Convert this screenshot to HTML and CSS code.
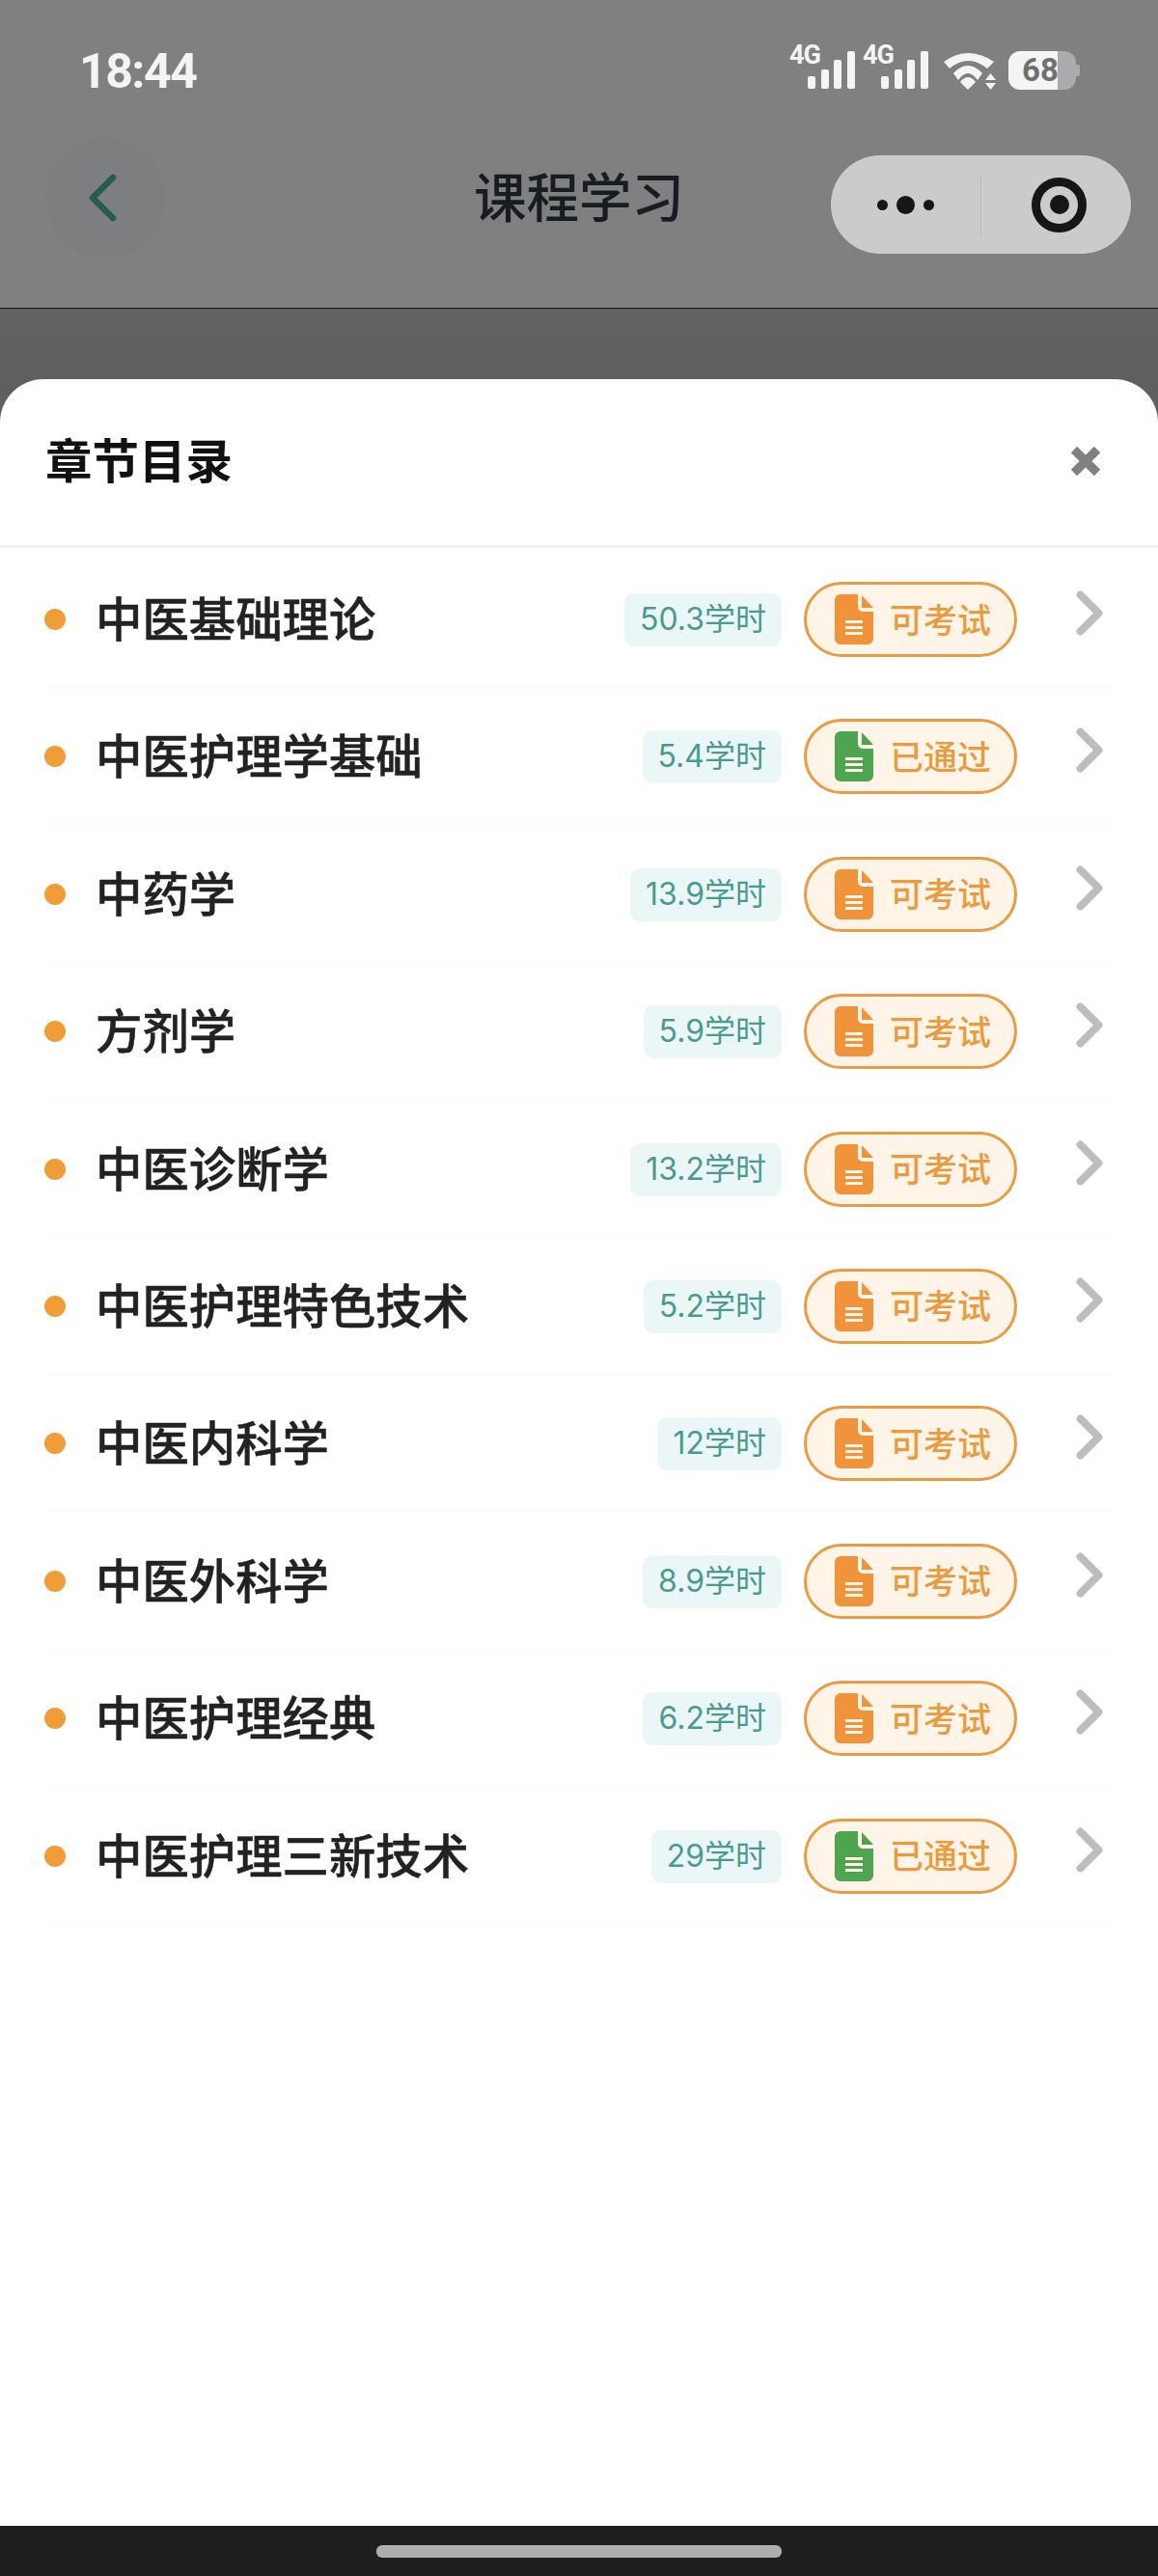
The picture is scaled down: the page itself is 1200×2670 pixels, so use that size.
FILE: index.html
```html
<!DOCTYPE html>
<html lang="zh-CN">
<head>
  <meta charset="UTF-8">
  <meta name="viewport" content="width=device-width, initial-scale=1.0">
  <title>课程学习</title>
  <link rel="stylesheet" href="styles.css">
</head>
<body>
  <svg class="defs" aria-hidden="true">
    <symbol id="doc" viewBox="0 0 40 52">
      <path fill="currentColor" d="M6 0H24V13a5 5 0 0 0 5 5H40V46a6 6 0 0 1-6 6H6a6 6 0 0 1-6-6V6a6 6 0 0 1 6-6z"/>
      <path fill="currentColor" d="M28 1L40 14H28z"/>
      <path fill="#fef5e8" d="M11 27H29V30H11zM11 33H29V36H11zM11 39H29V42H11z"/>
    </symbol>
    <symbol id="chev" viewBox="0 0 28 47">
      <path d="M4.5 4.5L23.5 23.5L4.5 42.5" fill="none" stroke="currentColor" stroke-width="8" stroke-linecap="round" stroke-linejoin="round"/>
    </symbol>
  </svg>

  <div class="topbar">
    <div class="status">
      <span class="clock">18:44</span>
      <svg class="status-icons" width="310" height="60" viewBox="0 0 310 60">
        <g fill="#f4f4f4">
          <text class="net" x="8" y="26">4G</text>
          <rect x="27" y="39" width="8" height="13" rx="2"/>
          <rect x="41" y="32" width="8" height="20" rx="2"/>
          <rect x="54" y="22" width="8" height="30" rx="2"/>
          <rect x="68" y="13" width="8" height="39" rx="2"/>
          <text class="net" x="84" y="26">4G</text>
          <rect x="103" y="39" width="8" height="13" rx="2"/>
          <rect x="117" y="32" width="8" height="20" rx="2"/>
          <rect x="130" y="22" width="8" height="30" rx="2"/>
          <rect x="144" y="13" width="8" height="39" rx="2"/>
          <path d="M168 24Q193 6 220 24L213 31Q193 15 174 31zM178 36Q193 20 208 36L203 43Q193 29 183 43zM185 45Q193 35 201 45L193 53z"/>
          <path d="M216.5 36L222 43H211zM211 46H222L216.5 53z"/>
          <path fill="#ababab" d="M280 13h13a12 12 0 0 1 12 12v16a12 12 0 0 1-12 12h-13z"/>
          <path fill="#ababab" d="M305 27h2a2 2 0 0 1 2 2v8a2 2 0 0 1-2 2h-2z"/>
          <path d="M247 13h39v40h-39a12 12 0 0 1-12-12v-16a12 12 0 0 1 12-12z"/>
          <text class="batt" x="249" y="44">68</text>
        </g>
      </svg>
    </div>
    <div class="nav">
      <div class="back">
        <svg width="30" height="50" viewBox="0 0 30 50"><path d="M26 4L5 25L26 46" fill="none" stroke="#235c50" stroke-width="6.5" stroke-linecap="round" stroke-linejoin="round"/></svg>
      </div>
      <div class="nav-title">课程学习</div>
      <div class="capsule">
        <div class="capsule-more">
          <i class="dot-s"></i><i class="dot-b"></i><i class="dot-s"></i>
        </div>
        <div class="capsule-sep"></div>
        <div class="capsule-home"><i></i></div>
      </div>
    </div>
  </div>

  <div class="backdrop">
    <div class="sheet">
      <div class="sheet-head">
        <span class="sheet-title">章节目录</span>
        <svg class="close" width="32" height="32" viewBox="0 0 32 32"><path d="M4 4L28 28M28 4L4 28" stroke="#808080" stroke-width="9" fill="none"/></svg>
      </div>
      <div class="list">
        <div class="row">
          <i class="bullet"></i><span class="name">中医基础理论</span><span class="hours">50.3学时</span>
          <span class="pill"><svg class="doc"><use href="#doc"/></svg>可考试</span>
          <svg class="chev"><use href="#chev"/></svg>
        </div>
        <div class="row">
          <i class="bullet"></i><span class="name">中医护理学基础</span><span class="hours">5.4学时</span>
          <span class="pill"><svg class="doc passed"><use href="#doc"/></svg>已通过</span>
          <svg class="chev"><use href="#chev"/></svg>
        </div>
        <div class="row">
          <i class="bullet"></i><span class="name">中药学</span><span class="hours">13.9学时</span>
          <span class="pill"><svg class="doc"><use href="#doc"/></svg>可考试</span>
          <svg class="chev"><use href="#chev"/></svg>
        </div>
        <div class="row">
          <i class="bullet"></i><span class="name">方剂学</span><span class="hours">5.9学时</span>
          <span class="pill"><svg class="doc"><use href="#doc"/></svg>可考试</span>
          <svg class="chev"><use href="#chev"/></svg>
        </div>
        <div class="row">
          <i class="bullet"></i><span class="name">中医诊断学</span><span class="hours">13.2学时</span>
          <span class="pill"><svg class="doc"><use href="#doc"/></svg>可考试</span>
          <svg class="chev"><use href="#chev"/></svg>
        </div>
        <div class="row">
          <i class="bullet"></i><span class="name">中医护理特色技术</span><span class="hours">5.2学时</span>
          <span class="pill"><svg class="doc"><use href="#doc"/></svg>可考试</span>
          <svg class="chev"><use href="#chev"/></svg>
        </div>
        <div class="row">
          <i class="bullet"></i><span class="name">中医内科学</span><span class="hours">12学时</span>
          <span class="pill"><svg class="doc"><use href="#doc"/></svg>可考试</span>
          <svg class="chev"><use href="#chev"/></svg>
        </div>
        <div class="row">
          <i class="bullet"></i><span class="name">中医外科学</span><span class="hours">8.9学时</span>
          <span class="pill"><svg class="doc"><use href="#doc"/></svg>可考试</span>
          <svg class="chev"><use href="#chev"/></svg>
        </div>
        <div class="row">
          <i class="bullet"></i><span class="name">中医护理经典</span><span class="hours">6.2学时</span>
          <span class="pill"><svg class="doc"><use href="#doc"/></svg>可考试</span>
          <svg class="chev"><use href="#chev"/></svg>
        </div>
        <div class="row">
          <i class="bullet"></i><span class="name">中医护理三新技术</span><span class="hours">29学时</span>
          <span class="pill"><svg class="doc passed"><use href="#doc"/></svg>已通过</span>
          <svg class="chev"><use href="#chev"/></svg>
        </div>
      </div>
    </div>
  </div>

  <div class="gesture"><i></i></div>
</body>
</html>
```

FILE: styles.css
```css
html, body {
  margin: 0;
  height: 100%;
}
body {
  width: 1200px;
  height: 2670px;
  overflow: hidden;
  display: flex;
  flex-direction: column;
  font-family: "Noto Sans", "Noto Sans CJK SC", sans-serif;
  background: #fff;
}
.defs {
  position: absolute;
  width: 0;
  height: 0;
}

/* top */
.topbar {
  height: 319px;
  flex: none;
  background: #808080;
  border-bottom: 1px solid #141414;
}
.status {
  height: 103px;
  padding: 40px 80px 0 82px;
  display: flex;
  justify-content: space-between;
  align-items: flex-start;
}
.clock {
  margin-top: 5px;
  font-family: Roboto, sans-serif;
  font-size: 50px;
  line-height: 58px;
  font-weight: 700;
  letter-spacing: -1.5px;
  color: #f4f4f4;
}
.status-icons text {
  font-family: Roboto, sans-serif;
  font-weight: 700;
}
.status-icons .net {
  font-size: 27px;
  letter-spacing: -1px;
}
.status-icons .batt {
  font-size: 33px;
  fill: #707070;
}
.nav {
  display: grid;
  grid-template-columns: 1fr auto 1fr;
  padding: 0 28px;
}
.back {
  width: 124px;
  height: 124px;
  margin-left: 19px;
  border-radius: 50%;
  background: #7d7e7f;
  display: flex;
  align-items: center;
  justify-content: center;
}
.back svg {
  margin-right: 7px;
}
.nav-title {
  height: 124px;
  line-height: 122px;
  font-size: 54.5px;
  font-weight: 500;
  color: #171c22;
}
.capsule {
  justify-self: end;
  width: 311px;
  height: 102px;
  margin-top: 18px;
  border-radius: 51px;
  background: #cbcbcb;
  display: flex;
  align-items: center;
}
.capsule-more {
  width: 155px;
  display: flex;
  align-items: center;
  justify-content: center;
  gap: 9px;
}
.capsule-more i {
  display: block;
  border-radius: 50%;
  background: #161616;
}
.dot-s {
  width: 11px;
  height: 11px;
}
.dot-b {
  width: 19px;
  height: 19px;
}
.capsule-sep {
  width: 1px;
  height: 63px;
  background: #bcbcbc;
}
.capsule-home {
  flex: 1;
  padding-left: 6px;
  display: flex;
  justify-content: center;
}
.capsule-home i {
  display: flex;
  width: 57px;
  height: 57px;
  box-sizing: border-box;
  border: 9px solid #161616;
  border-radius: 50%;
}
.capsule-home i::after {
  content: "";
  width: 20px;
  height: 20px;
  margin: auto;
  border-radius: 50%;
  background: #161616;
}

/* sheet */
.backdrop {
  flex: 1;
  padding-top: 73px;
  display: flex;
  background: linear-gradient(#636363, #5f5f5f 73px);
}
.sheet {
  flex: 1;
  background: #fff;
  border-radius: 45px 45px 0 0;
}
.sheet-head {
  height: 172px;
  padding: 0 59px 0 47px;
  border-bottom: 3px solid #f0f0f0;
  display: flex;
  align-items: center;
  justify-content: space-between;
}
.sheet-title {
  margin-bottom: 8px;
  font-size: 48.5px;
  font-weight: 700;
  color: #111;
}
.close {
  margin-bottom: 2px;
}
.list {
  padding: 3px 46px 0;
}
.row {
  height: 109px;
  padding-top: 32px;
  margin-bottom: 0.4px;
  border-bottom: 1px solid #fafbfb;
  display: flex;
  align-items: flex-start;
}
.bullet {
  width: 22px;
  height: 22px;
  margin-top: 28px;
  border-radius: 50%;
  background: #f09d38;
  flex: none;
}
.name {
  flex: 1;
  margin-left: 31px;
  font-size: 48.4px;
  line-height: 77px;
  font-weight: 500;
  -webkit-text-stroke: 0.5px #222;
  color: #222;
}
.hours {
  margin-top: 12px;
  height: 55px;
  padding: 0 16px;
  border-radius: 10px;
  background: #ebf7f6;
  font-family: Inter, "Noto Sans CJK SC", sans-serif;
  font-size: 32px;
  line-height: 53px;
  color: #4a9a8f;
}
.pill {
  margin-left: 23px;
  width: 221px;
  height: 78px;
  box-sizing: border-box;
  padding: 0 0 4px 29px;
  border: 3.5px solid #e89c45;
  border-radius: 39px;
  background: #fef5e8;
  display: flex;
  align-items: center;
  font-size: 35px;
  font-weight: 500;
  color: #ea9a3f;
}
.doc {
  width: 40px;
  height: 52px;
  margin: 4px 17px 0 0;
  color: #f0933a;
  flex: none;
}
.doc.passed {
  color: #4fa54f;
}
.chev {
  width: 28px;
  height: 47px;
  margin: 9px 11px 0 61px;
  color: #bdbdbd;
  flex: none;
}

/* bottom */
.gesture {
  height: 52px;
  flex: none;
  background: #1e1e1e;
  display: flex;
  align-items: center;
  justify-content: center;
}
.gesture i {
  width: 420px;
  height: 13px;
  border-radius: 6px;
  background: #aeaeae;
}
```
